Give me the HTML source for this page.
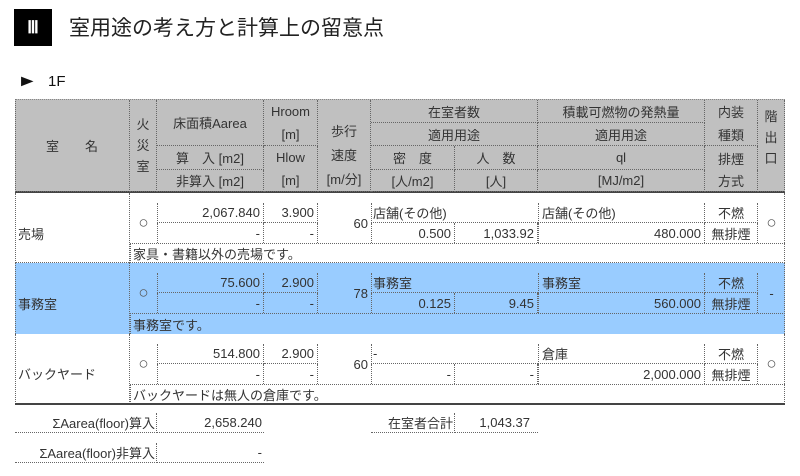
<!DOCTYPE html>
<html><head><meta charset="utf-8"><style>
body{margin:0;width:800px;height:476px;background:#fff;position:relative;overflow:hidden;font-family:"Liberation Sans","Noto Sans CJK JP",sans-serif;color:#333}
.c{position:absolute;box-sizing:border-box;font-size:13px;display:flex;align-items:center;white-space:nowrap;border-right:1px dotted #666;border-bottom:1px dotted #666;padding:0 3px}
.r{justify-content:flex-end}.m{justify-content:center;text-align:center}.l{justify-content:flex-start}
.v{flex-direction:column;justify-content:center;line-height:23px}
.nb{border:none}
.o{font-size:17px;color:#555}
</style></head><body>
<div style="position:absolute;left:14px;top:9px;width:38px;height:37px;background:#000;color:#fff;font-size:17px;font-weight:bold;display:flex;align-items:center;justify-content:center;font-family:'Liberation Serif',serif">Ⅲ</div>
<div style="position:absolute;left:69px;top:12px;font-size:21px;color:#222">室用途の考え方と計算上の留意点</div>
<div style="position:absolute;left:17px;top:73px;font-size:16px;color:#111;transform:scaleX(1.3);transform-origin:left">►</div>
<div style="position:absolute;left:48px;top:73px;font-size:15px;color:#111">1F</div>
<div style="position:absolute;left:15px;top:99px;width:770px;height:93px;background:#c0c0c0;border-top:1px dotted #888;border-left:1px dotted #666;box-sizing:border-box"></div>
<div style="position:absolute;left:15px;top:191px;width:770px;height:2px;background:#444"></div>
<!-- header -->
<div class="c m" style="left:15px;top:100px;width:115px;height:92px">室　　名</div>
<div class="c m v" style="left:130px;top:100px;width:27px;height:92px;line-height:21px">火<br>災<br>室</div>
<div class="c m" style="left:157px;top:100px;width:107px;height:46px">床面積Aarea</div>
<div class="c m" style="left:157px;top:146px;width:107px;height:24px">算　入 [m2]</div>
<div class="c m" style="left:157px;top:170px;width:107px;height:22px">非算入 [m2]</div>
<div class="c m v" style="left:264px;top:100px;width:54px;height:46px">Hroom<br>[m]</div>
<div class="c m v" style="left:264px;top:146px;width:54px;height:46px">Hlow<br>[m]</div>
<div class="c m v" style="left:318px;top:100px;width:53px;height:92px;line-height:24px;padding-top:20px">歩行<br>速度<br>[m/分]</div>
<div class="c m" style="left:371px;top:100px;width:167px;height:23px">在室者数</div>
<div class="c m" style="left:371px;top:123px;width:167px;height:23px">適用用途</div>
<div class="c m" style="left:371px;top:146px;width:84px;height:24px">密　度</div>
<div class="c m" style="left:371px;top:170px;width:84px;height:22px">[人/m2]</div>
<div class="c m" style="left:455px;top:146px;width:83px;height:24px">人　数</div>
<div class="c m" style="left:455px;top:170px;width:83px;height:22px">[人]</div>
<div class="c m" style="left:538px;top:100px;width:167px;height:23px">積載可燃物の発熱量</div>
<div class="c m" style="left:538px;top:123px;width:167px;height:23px">適用用途</div>
<div class="c m" style="left:538px;top:146px;width:167px;height:24px">ql</div>
<div class="c m" style="left:538px;top:170px;width:167px;height:22px">[MJ/m2]</div>
<div class="c m" style="left:705px;top:100px;width:53px;height:23px;border-bottom:none">内装</div>
<div class="c m" style="left:705px;top:123px;width:53px;height:23px">種類</div>
<div class="c m" style="left:705px;top:146px;width:53px;height:24px;border-bottom:none">排煙</div>
<div class="c m" style="left:705px;top:170px;width:53px;height:22px">方式</div>
<div class="c m v" style="left:758px;top:100px;width:27px;height:92px;line-height:21px;padding-bottom:16px">階<br>出<br>口</div>

<!-- row 1 -->
<div style="position:absolute;left:15px;top:193px;width:770px;height:70px;border-left:1px dotted #666;border-right:1px dotted #666;box-sizing:border-box"></div>
<div class="c l" style="left:15px;top:193px;width:115px;height:70px;border-bottom:none;padding-top:10px">売場</div>
<div class="c m o nb" style="left:130px;top:203px;width:27px;height:40px">○</div>
<div class="c r" style="left:157px;top:203px;width:107px;height:20px;border-left:1px dotted #666">2,067.840</div>
<div class="c r" style="left:157px;top:223px;width:107px;height:20px;border-left:1px dotted #666;border-bottom:none">-</div>
<div class="c r" style="left:264px;top:203px;width:54px;height:20px">3.900</div>
<div class="c r" style="left:264px;top:223px;width:54px;height:20px;border-bottom:none">-</div>
<div class="c r nb" style="left:318px;top:203px;width:53px;height:40px">60</div>
<div class="c l" style="left:371px;top:203px;width:167px;height:20px;border-left:1px dotted #666;border-right:none;padding-left:1px">店舗(その他)</div>
<div class="c r" style="left:371px;top:223px;width:84px;height:20px;border-left:1px dotted #666;border-bottom:none">0.500</div>
<div class="c r" style="left:455px;top:223px;width:83px;height:20px;border-bottom:none">1,033.92</div>
<div class="c l" style="left:538px;top:203px;width:167px;height:20px;border-left:1px dotted #666">店舗(その他)</div>
<div class="c r" style="left:538px;top:223px;width:167px;height:20px;border-left:1px dotted #666;border-bottom:none">480.000</div>
<div class="c m" style="left:705px;top:203px;width:53px;height:20px">不燃</div>
<div class="c m" style="left:705px;top:223px;width:53px;height:20px;border-bottom:none">無排煙</div>
<div class="c m o nb" style="left:758px;top:193px;width:27px;height:60px">○</div>
<div class="c l" style="left:130px;top:243px;width:655px;height:20px;border-top:1px dotted #666;border-left:1px dotted #666;border-right:none;border-bottom:none;padding-left:2px">家具・書籍以外の売場です。</div>
<div style="position:absolute;left:15px;top:262px;width:770px;border-top:1px dotted #666"></div>

<!-- row 2 -->
<div style="position:absolute;left:15px;top:263px;width:770px;height:71px;background:#99ccff;border-left:1px dotted #666;border-right:1px dotted #666;box-sizing:border-box"></div>
<div class="c l" style="left:15px;top:263px;width:115px;height:71px;border-bottom:none;padding-top:10px">事務室</div>
<div class="c m o nb" style="left:130px;top:273px;width:27px;height:40px">○</div>
<div class="c r" style="left:157px;top:273px;width:107px;height:20px;border-left:1px dotted #666">75.600</div>
<div class="c r" style="left:157px;top:293px;width:107px;height:20px;border-left:1px dotted #666;border-bottom:none">-</div>
<div class="c r" style="left:264px;top:273px;width:54px;height:20px">2.900</div>
<div class="c r" style="left:264px;top:293px;width:54px;height:20px;border-bottom:none">-</div>
<div class="c r nb" style="left:318px;top:273px;width:53px;height:40px">78</div>
<div class="c l" style="left:371px;top:273px;width:167px;height:20px;border-left:1px dotted #666;border-right:none;padding-left:1px">事務室</div>
<div class="c r" style="left:371px;top:293px;width:84px;height:20px;border-left:1px dotted #666;border-bottom:none">0.125</div>
<div class="c r" style="left:455px;top:293px;width:83px;height:20px;border-bottom:none">9.45</div>
<div class="c l" style="left:538px;top:273px;width:167px;height:20px;border-left:1px dotted #666">事務室</div>
<div class="c r" style="left:538px;top:293px;width:167px;height:20px;border-left:1px dotted #666;border-bottom:none">560.000</div>
<div class="c m" style="left:705px;top:273px;width:53px;height:20px">不燃</div>
<div class="c m" style="left:705px;top:293px;width:53px;height:20px;border-bottom:none">無排煙</div>
<div class="c m nb" style="left:758px;top:263px;width:27px;height:60px">-</div>
<div class="c l" style="left:130px;top:313px;width:655px;height:21px;border-top:1px dotted #666;border-left:1px dotted #666;border-right:none;border-bottom:none;padding-left:2px">事務室です。</div>

<!-- row 3 -->
<div style="position:absolute;left:15px;top:334px;width:770px;height:70px;border-left:1px dotted #666;border-right:1px dotted #666;box-sizing:border-box"></div>
<div class="c l" style="left:15px;top:334px;width:115px;height:70px;border-bottom:none;padding-top:8px">バックヤード</div>
<div class="c m o nb" style="left:130px;top:344px;width:27px;height:40px">○</div>
<div class="c r" style="left:157px;top:344px;width:107px;height:20px;border-left:1px dotted #666">514.800</div>
<div class="c r" style="left:157px;top:364px;width:107px;height:20px;border-left:1px dotted #666;border-bottom:none">-</div>
<div class="c r" style="left:264px;top:344px;width:54px;height:20px">2.900</div>
<div class="c r" style="left:264px;top:364px;width:54px;height:20px;border-bottom:none">-</div>
<div class="c r nb" style="left:318px;top:344px;width:53px;height:40px">60</div>
<div class="c l" style="left:371px;top:344px;width:167px;height:20px;border-left:1px dotted #666;border-right:none;padding-left:1px">-</div>
<div class="c r" style="left:371px;top:364px;width:84px;height:20px;border-left:1px dotted #666;border-bottom:none">-</div>
<div class="c r" style="left:455px;top:364px;width:83px;height:20px;border-bottom:none">-</div>
<div class="c l" style="left:538px;top:344px;width:167px;height:20px;border-left:1px dotted #666">倉庫</div>
<div class="c r" style="left:538px;top:364px;width:167px;height:20px;border-left:1px dotted #666;border-bottom:none">2,000.000</div>
<div class="c m" style="left:705px;top:344px;width:53px;height:20px">不燃</div>
<div class="c m" style="left:705px;top:364px;width:53px;height:20px;border-bottom:none">無排煙</div>
<div class="c m o nb" style="left:758px;top:334px;width:27px;height:60px">○</div>
<div class="c l" style="left:130px;top:384px;width:655px;height:20px;border-top:1px dotted #666;border-left:1px dotted #666;border-right:none;border-bottom:none;padding-left:2px">バックヤードは無人の倉庫です。</div>
<div style="position:absolute;left:15px;top:403px;width:770px;height:2px;background:#444"></div>

<!-- footer -->
<div class="c r" style="left:15px;top:413px;width:142px;height:20px;padding-right:1px">ΣAarea(floor)算入</div>
<div class="c r" style="left:157px;top:413px;width:107px;height:20px;border-right:none;padding-right:2px">2,658.240</div>
<div class="c r" style="left:15px;top:443px;width:142px;height:20px;padding-right:1px">ΣAarea(floor)非算入</div>
<div class="c r" style="left:157px;top:443px;width:107px;height:20px;border-right:none;padding-right:2px">-</div>
<div class="c r" style="left:371px;top:413px;width:84px;height:20px;padding-right:1px">在室者合計</div>
<div class="c r" style="left:455px;top:413px;width:83px;height:20px;border-right:none;padding-right:8px">1,043.37</div>
</body></html>
